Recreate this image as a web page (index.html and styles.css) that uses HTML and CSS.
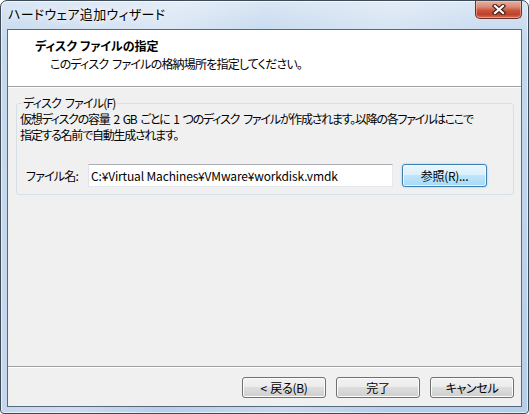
FILE: index.html
```html
<!DOCTYPE html>
<html lang="ja">
<head>
  <meta charset="UTF-8" />
  <meta name="viewport" content="width=device-width, initial-scale=1.0" />
  <title>ハードウェア追加ウィザード</title>
  <link rel="stylesheet" href="styles.css">
</head>
<body>
  <div class="window">
    <div class="titlebar">
      <span class="title">ハードウェア追加ウィザード</span>
      <button class="close" aria-label="閉じる">
        <svg width="14" height="11" viewBox="0 0 14 11">
          <path d="M3 2 L11 9 M11 2 L3 9" stroke="#4a2016" stroke-width="4.4" stroke-linecap="square" fill="none" />
          <path d="M3 2 L11 9 M11 2 L3 9" stroke="#fff" stroke-width="2.2" stroke-linecap="square" fill="none" />
        </svg>
      </button>
    </div>

    <div class="client">
      <div class="header">
        <div class="header-title">ディスク ファイルの指定</div>
        <div class="header-sub">このディスク ファイルの格納場所を指定してください。</div>
      </div>

      <div class="content">
        <fieldset class="group">
          <legend>ディスク ファイル(F)</legend>
          <p class="desc">仮想ディスクの容量 2 GB ごとに 1 つのディスク ファイルが作成されます。以降の各ファイルはここで<br>指定する名前で自動生成されます。</p>
          <div class="file-row">
            <label for="fileName">ファイル名:</label>
            <input type="text" id="fileName" value="C:¥Virtual Machines¥VMware¥workdisk.vmdk" />
            <button class="btn btn-default">参照(R)...</button>
          </div>
        </fieldset>
      </div>

      <div class="footer">
        <button class="btn">&lt; 戻る(B)</button>
        <button class="btn">完了</button>
        <button class="btn">キャンセル</button>
      </div>
    </div>
  </div>
</body>
</html>
```

FILE: styles.css
```css
* {
  margin: 0;
  padding: 0;
  box-sizing: border-box;
}
body {
  background: #fff;
  font-family: "Noto Sans CJK JP", "Noto Sans", sans-serif;
  font-size: 12px;
  font-feature-settings: "palt";
  letter-spacing: -0.8px;
  word-spacing: 2px;
  color: #000;
}
.window {
  width: 529px;
  height: 414px;
  display: flex;
  flex-direction: column;
  padding: 0 6px 6px;
  border: 1px solid #3e4a58;
  border-radius: 7px 7px 4px 4px;
  background:
    linear-gradient(105deg, rgba(255,255,255,0) 0, rgba(255,255,255,.3) 28%, rgba(255,255,255,0) 42%, rgba(255,255,255,.25) 62%, rgba(255,255,255,0) 78%),
    linear-gradient(#d9e6f4, #c4d8ee 40px, #b7cee9);
  box-shadow: inset 0 0 0 1px rgba(255,255,255,.6);
}
.titlebar {
  height: 28px;
  display: flex;
  justify-content: space-between;
  align-items: flex-start;
}
.title {
  padding: 5px 0 0 1px;
  font-size: 13px;
  line-height: 16px;
  letter-spacing: 0.3px;
  text-shadow: 0 0 6px #fff, 0 0 10px rgba(255,255,255,.9);
}
.close {
  width: 47px;
  height: 18px;
  display: flex;
  align-items: center;
  justify-content: center;
  border: 1px solid #6e3024;
  border-top: none;
  border-radius: 0 0 5px 5px;
  background: linear-gradient(#eab0a0 0, #d98a76 35%, #c7563d 55%, #c0412a 80%, #d8755c 100%);
  box-shadow: inset 0 0 0 1px rgba(255,210,190,.45);
}
.client {
  flex: 1;
  display: flex;
  flex-direction: column;
  border: 1px solid #59697c;
  background: #f0f0f0;
}
.header {
  height: 57px;
  padding: 8px 0 0 27px;
  background: #fff;
  border-bottom: 1px solid #a0a0a0;
  line-height: 15px;
}
.header-title {
  font-weight: bold;
  letter-spacing: 0;
  word-spacing: 0;
}
.header-sub {
  margin-top: 3px;
  padding-left: 15px;
}
.content {
  flex: 1;
  border-top: 1px solid #fff;
  padding: 8px 7px 0 8px;
}
.group {
  border: 1px solid #d5dfe5;
  border-radius: 3px;
  padding: 0 0 7px 3px;
  min-width: 0;
}
.group legend {
  margin-left: 2px;
  padding: 0 1px;
  line-height: 14px;
}
.desc {
  margin-top: 1px;
  line-height: 16px;
  letter-spacing: -1.25px;
  word-spacing: 2.5px;
}
.file-row {
  display: flex;
  align-items: center;
  margin-top: 21px;
}
.file-row label {
  flex: 0 0 68px;
  padding-left: 6px;
}
.file-row input {
  width: 305px;
  height: 23px;
  padding: 0 2px;
  font: inherit;
  letter-spacing: -0.15px;
  word-spacing: 0;
  border: 1px solid #e3e9ef;
  border-top-color: #abadb3;
  border-left-color: #e2e3ea;
  background: #fff;
  color: #000;
}
.file-row .btn {
  width: 85px;
  height: 23px;
  margin-left: 9px;
}
.footer {
  height: 40px;
  display: flex;
  justify-content: flex-end;
  gap: 10px;
  padding: 10px 7px 0 0;
  border-top: 1px solid #a0a0a0;
  box-shadow: inset 0 1px #fff;
}
.btn {
  width: 84px;
  height: 21px;
  font: inherit;
  letter-spacing: -0.3px;
  word-spacing: 1px;
  color: #000;
  border: 1px solid #707070;
  border-radius: 3px;
  background: linear-gradient(#f2f2f2 0, #ebebeb 50%, #dddddd 50%, #cfcfcf 100%);
  box-shadow: inset 0 0 0 1px #fcfcfc;
}
.btn-default {
  border-color: #3c7fb1;
  background: linear-gradient(#eaf6fd 0, #d9f0fc 50%, #bee6fd 50%, #a7d9f5 100%);
  box-shadow: inset 0 0 0 1px rgba(255,255,255,.7), 0 0 2px #7dc4ec;
}
```
